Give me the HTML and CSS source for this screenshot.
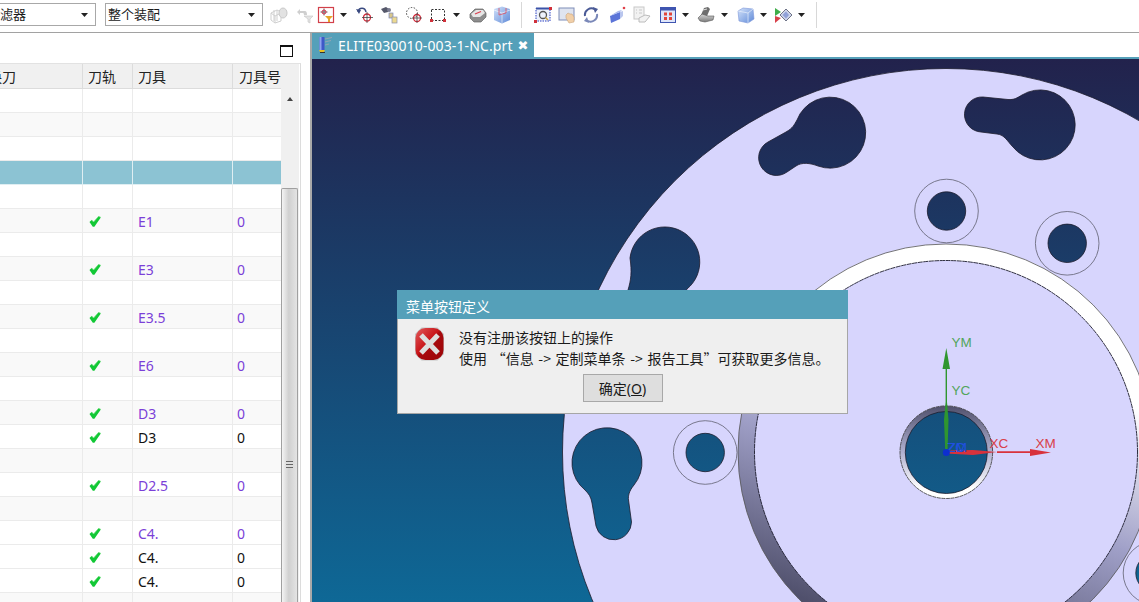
FILE: index.html
```html
<!DOCTYPE html>
<html lang="zh-CN">
<head>
<meta charset="utf-8">
<title>ELITE030010-003-1-NC.prt</title>
<link rel="stylesheet" href="styles.css">
</head>
<body>
<svg class="defs" width="0" height="0" aria-hidden="true">
  <symbol id="check" viewBox="0 0 12 11">
    <path d="M0.5 6 L2.6 3.9 L4.6 6 L9.6 0.3 L11.8 1.4 L5.4 10.8 L3.8 10.8 Z" fill="#12c836"/>
    <path d="M2.6 3.9 L4.6 6 L9.6 0.3 L11.8 1.4" fill="none" stroke="#6fe07a" stroke-width=".7"/>
  </symbol>
  <symbol id="caret" viewBox="0 0 7 4"><path d="M0 0H7L3.5 4Z" fill="#222"/></symbol>
  <linearGradient id="cube" x1="0" y1="0" x2="1" y2="1"><stop offset="0" stop-color="#d3e2fa"/><stop offset="1" stop-color="#5f8ad8"/></linearGradient>
  <linearGradient id="grey" x1="0" y1="0" x2="0" y2="1"><stop offset="0" stop-color="#d8d8d8"/><stop offset="1" stop-color="#7a7a7a"/></linearGradient>
</svg>

<header class="toolbar">
  <div class="combo combo-filter"><span>滤器</span><svg class="caret"><use href="#caret"/></svg></div>
  <div class="combo combo-scope"><span>整个装配</span><svg class="caret"><use href="#caret"/></svg></div>

  <svg class="ico ml7" viewBox="0 0 18 18"><path d="M1 7 7 4 11 6V15L5 17 1 14ZM1 7 5 10V17M5 10 11 7M4 4V15M7 4V15" fill="none" stroke="#cfcfcf"/><ellipse cx="13" cy="7" rx="4" ry="5" fill="#e2e2e2" stroke="#c8c8c8"/></svg>
  <svg class="ico ml8" viewBox="0 0 18 18"><path d="M1 6 4 3V5H9Q11 5 11 9H8Q8 7 7 7H4V9Z" fill="#cfcfcf"/><path d="M8 10H17L14 13V17L12 16V13Z" fill="#e4e4e4" stroke="#c4c4c4" stroke-width=".6"/></svg>
  <svg class="ico ml3" viewBox="0 0 18 18"><rect x="1.500" y="1.500" width="15" height="15" fill="#fff" stroke="#d2404a" stroke-width="1.200"/><path d="M7 2.500V9.500M3.500 6H10.500" stroke="#444" stroke-width=".8"/><circle cx="7" cy="6" r="2" fill="none" stroke="#d0304a"/><path d="M8 10H16L13 13V16H11V13Z" fill="#e6a62a"/></svg>
  <svg class="car ml5"><use href="#caret"/></svg>
  <svg class="ico ml9" viewBox="0 0 18 18"><path d="M2 6C3 1 9 1 10 6" fill="none" stroke="#3a4a80" stroke-width="1.500"/><path d="M0 3 3 8 5 4Z" fill="#3a4a80"/><circle cx="11" cy="11.500" r="3.500" fill="none" stroke="#d02a3a" stroke-width="1.300"/><path d="M11 6V17M6 11.500H17" stroke="#444" stroke-width=".8"/></svg>
  <svg class="ico ml6" viewBox="0 0 18 18"><path d="M1 3 6 1 9 3 8 6 4 7Z" fill="#55586a"/><circle cx="9" cy="4" r="2" fill="#7a7c90"/><rect x="9" y="7" width="4" height="5" fill="#d9c78a" stroke="#7c88b8" stroke-width=".7"/><rect x="12" y="11" width="5" height="6" fill="#ecd98f" stroke="#8a8fb0" stroke-width=".7"/></svg>
  <svg class="ico ml7" viewBox="0 0 18 18"><circle cx="7" cy="7" r="5.500" fill="none" stroke="#444" stroke-dasharray="1.500 1.500"/><circle cx="12" cy="12" r="3.500" fill="none" stroke="#d02a3a" stroke-width="1.300"/><path d="M12 7V17M7 12H17" stroke="#444" stroke-width=".8"/></svg>
  <svg class="ico ml6" viewBox="0 0 18 18"><rect x="2.500" y="3.500" width="13" height="11" fill="none" stroke="#333" stroke-dasharray="2 1.500"/><rect x="1" y="13" width="3" height="3" fill="#d0303a"/><rect x="14" y="13" width="3" height="3" fill="#d0303a"/></svg>
  <svg class="car ml6"><use href="#caret"/></svg>
  <svg class="ico ml9" viewBox="0 0 18 18"><path d="M1 8 6 3 14 3 17 7V11L12 16H5L1 12Z" fill="#8d8d8d" stroke="#666" stroke-width=".7"/><path d="M2 8 7 4H14L16 7 11 11H4Z" fill="#e6e6e6"/><path d="M6 8 12 5.500" stroke="#d94050" stroke-width="1.300"/></svg>
  <svg class="ico ml6" viewBox="0 0 18 18"><path d="M1 3 9 0.500 17 3V14L9 17.500 1 14Z" fill="url(#cube)"/><path d="M1 4 9 7 17 4M9 7V17" fill="none" stroke="#fff" stroke-width=".6"/><path d="M6 2V9L13 7V2" fill="none" stroke="#e05060" stroke-width=".8"/></svg>
  <span class="sep"></span>
  <svg class="ico ml12" viewBox="0 0 18 18"><rect x="2" y="2.500" width="14" height="12.500" fill="#eef2fb" stroke="#2a3fc0" stroke-dasharray="1.500 1"/><rect x="2" y="1.500" width="14" height="2" fill="#3a52a8"/><circle cx="9" cy="9" r="3.500" fill="none" stroke="#555" stroke-width="1.300"/><path d="M11.500 11.500 14 14" stroke="#c9a23c" stroke-width="1.500"/><rect x="0" y="14" width="3" height="3" fill="#d0303a"/><rect x="15" y="1" width="3" height="3" fill="#d0303a"/></svg>
  <svg class="ico ml6" viewBox="0 0 18 18"><rect x="1" y="2" width="15" height="12" fill="#dfe4f0" stroke="#7f8db8"/><path d="M8 9 10 7 12 8 14 8 16 11 16 16 11 17 8 12Z" fill="#f1cfa8" stroke="#c9a47c" stroke-width=".6"/></svg>
  <svg class="ico ml6" viewBox="0 0 18 18"><path d="M3 10A6.500 6.500 0 0 1 13 3.500" fill="none" stroke="#4a5a96" stroke-width="2"/><path d="M15 8A6.500 6.500 0 0 1 5 14.500" fill="none" stroke="#7a88b8" stroke-width="2"/><path d="M11 1 16 3 13 7Z" fill="#4a5a96"/><path d="M7 17 2 15 5 11Z" fill="#7a88b8"/></svg>
  <svg class="ico ml8" viewBox="0 0 18 18"><path d="M2 10 12 6V13L3 17Z" fill="#5b74d8"/><path d="M2 10 10 5 14 4 12 6Z" fill="#a8b8ee"/><path d="M12 6 15 5V10L12 13Z" fill="#b9c6ee"/><circle cx="16" cy="2" r="1.300" fill="#e0404a"/></svg>
  <svg class="ico ml7" viewBox="0 0 18 18"><rect x="1" y="1" width="10" height="12" fill="#f2f2f2" stroke="#c8c8c8"/><path d="M3 4H4M6 4H9M3 7H4M6 7H9" stroke="#c8c8c8"/><path d="M6 12 12 9 17 10 12 16 6 16Z" fill="#f2f2f2" stroke="#bcbcbc"/></svg>
  <svg class="ico ml8" viewBox="0 0 18 18"><rect x="1.500" y="1.500" width="15" height="15" fill="#dfe6fa" stroke="#3f55b0"/><rect x="1.500" y="1.500" width="15" height="3" fill="#3f55b0"/><path d="M5 6.500H8V9.500H5ZM10 6.500H13V9.500H10ZM5 11H8V14H5ZM10 11H13V14H10Z" fill="#e2453a"/></svg>
  <svg class="car ml5"><use href="#caret"/></svg>
  <svg class="ico ml8" viewBox="0 0 18 18"><path d="M4 9 7 2 11 1 13 3 10 10Z" fill="#6e6e6e"/><path d="M1 12 5 8 11 10 17 10 16 14 8 16 3 15Z" fill="url(#grey)" stroke="#555" stroke-width=".6"/><path d="M6 4 10 3" stroke="#ddd"/></svg>
  <svg class="car ml6"><use href="#caret"/></svg>
  <svg class="ico ml9" viewBox="0 0 18 18"><path d="M1 5 6 2 16 3 17 13 11 17 2 15Z" fill="url(#cube)" stroke="#7c95d8" stroke-width=".6"/><path d="M1 5 11 7 16 3M11 7V17" fill="none" stroke="#e8effb" stroke-width=".7"/></svg>
  <svg class="car ml5"><use href="#caret"/></svg>
  <svg class="ico ml7" viewBox="0 0 18 18"><path d="M6 9 12 3 18 9 12 15Z" fill="#cdd4ea" stroke="#6f7488"/><path d="M8.500 9 12 5.500 15 9 12 12.500Z" fill="#8fa0d8"/><path d="M1 2 7 6 1 10Z" fill="#3fae4a"/><path d="M1 10 7 12 1 17Z" fill="#d8404a"/></svg>
  <svg class="car ml6"><use href="#caret"/></svg>
  <span class="sep sep-end"></span>
</header>

<main class="workspace">
  <section class="nav-panel">
    <div class="panel-head"><span class="maximize"></span></div>
    <div class="grid-wrap">
      <table class="grid">
        <colgroup><col class="c1"><col class="c2"><col class="c3"><col class="c4"></colgroup>
        <thead><tr><th><span class="clip-head">换刀</span></th><th>刀轨</th><th>刀具</th><th>刀具号</th></tr></thead>
        <tbody>
          <tr><td></td><td></td><td></td><td></td></tr>
          <tr class="alt"><td></td><td></td><td></td><td></td></tr>
          <tr><td></td><td></td><td></td><td></td></tr>
          <tr class="sel"><td></td><td></td><td></td><td></td></tr>
          <tr><td></td><td></td><td></td><td></td></tr>
          <tr class="alt link"><td></td><td><svg class="ok"><use href="#check"/></svg></td><td>E1</td><td>0</td></tr>
          <tr><td></td><td></td><td></td><td></td></tr>
          <tr class="alt link"><td></td><td><svg class="ok"><use href="#check"/></svg></td><td>E3</td><td>0</td></tr>
          <tr><td></td><td></td><td></td><td></td></tr>
          <tr class="alt link"><td></td><td><svg class="ok"><use href="#check"/></svg></td><td>E3.5</td><td>0</td></tr>
          <tr><td></td><td></td><td></td><td></td></tr>
          <tr class="alt link"><td></td><td><svg class="ok"><use href="#check"/></svg></td><td>E6</td><td>0</td></tr>
          <tr><td></td><td></td><td></td><td></td></tr>
          <tr class="alt link"><td></td><td><svg class="ok"><use href="#check"/></svg></td><td>D3</td><td>0</td></tr>
          <tr><td></td><td><svg class="ok"><use href="#check"/></svg></td><td>D3</td><td>0</td></tr>
          <tr class="alt"><td></td><td></td><td></td><td></td></tr>
          <tr class="link"><td></td><td><svg class="ok"><use href="#check"/></svg></td><td>D2.5</td><td>0</td></tr>
          <tr class="alt"><td></td><td></td><td></td><td></td></tr>
          <tr class="link"><td></td><td><svg class="ok"><use href="#check"/></svg></td><td>C4.</td><td>0</td></tr>
          <tr><td></td><td><svg class="ok"><use href="#check"/></svg></td><td>C4.</td><td>0</td></tr>
          <tr><td></td><td><svg class="ok"><use href="#check"/></svg></td><td>C4.</td><td>0</td></tr>
          <tr class="alt"><td></td><td></td><td></td><td></td></tr>
        </tbody>
      </table>
      <div class="scrollbar">
        <div class="scroll-up"></div>
        <div class="scroll-thumb"><span class="grip"></span></div>
      </div>
    </div>
  </section>

  <section class="view-panel">
    <div class="tabstrip">
      <div class="tab">
        <svg class="tab-icon" viewBox="0 0 16 18"><path d="M7 3 14 1.500M7 6 13 4.500M7 9 11 8" stroke="#9aa6b4" stroke-width=".9"/><rect x="1.500" y="1" width="5" height="13" fill="#3f58c8"/><rect x="1.500" y="1" width="2" height="13" fill="#8ea2ee"/><path d="M1 14H7L6 16H2Z" fill="#e8c020"/><path d="M2 16.500H7" stroke="#333" stroke-width="1"/></svg>
        <span class="tab-name">ELITE030010-003-1-NC.prt</span>
        <span class="tab-close">✖</span>
      </div>
    </div>
    <div class="viewport">
      <svg class="model" viewBox="312 59 827 543">
        <defs>
          <linearGradient id="sky" gradientUnits="userSpaceOnUse" x1="0" y1="59" x2="0" y2="602"><stop offset="0" stop-color="#22224c"/><stop offset="1" stop-color="#0e6896"/></linearGradient>
          <linearGradient id="bore" gradientUnits="userSpaceOnUse" x1="946" y1="332" x2="847" y2="614"><stop offset="0.03" stop-color="#fff"/><stop offset="0.49" stop-color="#a0a0c8"/><stop offset="1" stop-color="#50506c"/></linearGradient>
          <linearGradient id="wall" gradientUnits="userSpaceOnUse" x1="0" y1="406" x2="0" y2="498"><stop offset="0" stop-color="#50506c"/><stop offset=".5" stop-color="#b0b0d0"/><stop offset=".9" stop-color="#fff"/></linearGradient>
        </defs>
        <rect class="sky" x="312" y="59" width="827" height="543"/>
        <circle class="disk" cx="946" cy="452" r="383.500"/>
        <circle class="bore-outer" cx="946" cy="452" r="208"/>
        <circle class="bore-inner" cx="946" cy="452" r="191.500"/>

        <path class="hole" d="M797 120A35.500 35.500 0 1 1 818 166C810 163 802 162 796 166L787 172A17.800 17.800 0 1 1 768 142L786 132C793 128 794 125 797 120Z"/>
        <path class="hole" d="M1022 95A35 35 0 1 1 1013 147C1007 141 1005 135 997 134L981 132A17.500 17.500 0 0 1 983 97L1008 99.500C1014 100 1017 98 1022 95Z"/>
        <path class="hole" d="M630 258A35 35 0 1 1 687 289L680 300H630L628 290C631 280 632 272 630 258Z"/>
        <path class="hole" d="M585 490A35 35 0 1 1 634 485C629 491 628 496 628.500 500L631.500 522A18 18 0 0 1 596 526L592 503C591 497 589 494 585 490Z"/>

        <circle class="collar" cx="946.500" cy="211" r="31.800"/><circle class="hole" cx="946.500" cy="211" r="19.200"/>
        <circle class="collar" cx="1067.200" cy="243.300" r="31.800"/><circle class="hole" cx="1067.200" cy="243.300" r="19.200"/>
        <circle class="collar" cx="705.200" cy="452.500" r="31.800"/><circle class="hole" cx="705.200" cy="452.500" r="19.200"/>
        <circle class="collar" cx="1155" cy="573" r="31.800"/><circle class="hole" cx="1155" cy="573" r="19.200"/>

        <circle class="center-wall" cx="946.300" cy="452.200" r="46.300"/>
        <circle class="hole" cx="946.300" cy="452.500" r="41"/>

        <path class="axis-y" d="M942.500 369 946.300 348 950 369 947 369V402L948.500 420 947.500 452H945.300L944 420 945.600 402V369Z"/>
        <path class="axis-x" d="M946 450.500 973 450 997 452 973 455 946 453.500Z"/>
        <path class="axis-x" d="M997 451.300H1030V449L1051 452.500 1030 456V453H997Z"/>
        <text class="lbl lbl-z" x="947" y="452">ZC</text>
        <text class="lbl lbl-z" x="947.500" y="452">ZM</text>
        <circle class="origin" cx="946.300" cy="452.500" r="3.500"/>
        <text class="lbl lbl-y" x="951.500" y="347">YM</text>
        <text class="lbl lbl-y" x="951.500" y="395">YC</text>
        <text class="lbl lbl-x" x="989.500" y="448">XC</text>
        <text class="lbl lbl-x" x="1035.500" y="448">XM</text>
      </svg>

      <div class="dialog" role="dialog">
        <div class="dialog-title">菜单按钮定义</div>
        <div class="dialog-body">
          <svg class="err" viewBox="0 0 30 34">
            <defs>
              <linearGradient id="errfill" x1="0" y1="0" x2="1" y2="1"><stop offset="0" stop-color="#e25a5c"/><stop offset=".45" stop-color="#c81418"/><stop offset=".5" stop-color="#a80a0e"/><stop offset="1" stop-color="#9c0408"/></linearGradient>
            </defs>
            <path d="M7 .5H23L29.500 7V27L23 33.500H7L.5 27V7Z" fill="#c4c4c4"/>
            <rect x="1" y="1" width="28" height="32" rx="10" fill="url(#errfill)"/>
            <path d="M6.500 8 23.500 26M23.500 8 6.500 26" stroke="#dedede" stroke-width="5"/>
          </svg>
          <div class="message">
            <p>没有注册该按钮上的操作</p>
            <p class="spaced">使用 “信息 -&gt; 定制菜单条 -&gt; 报告工具”可获取更多信息。</p>
          </div>
        </div>
        <div class="dialog-actions"><button class="btn" type="button">确定(<u>O</u>)</button></div>
      </div>
    </div>
  </section>
</main>
</body>
</html>
```
FILE: styles.css
```css
* { box-sizing: border-box; }
html, body { margin: 0; height: 100%; overflow: hidden; background: #fff; }
body { width: 1139px; height: 602px; font: 14px "Noto Sans", "Noto Sans CJK SC", sans-serif; color: #1a1a1a; }
.defs { position: absolute; }

.toolbar { display: flex; align-items: center; height: 33px; border-bottom: 1px solid #a2a2a2; padding-bottom: 3px; background: #fff; }
.combo { display: flex; align-items: center; justify-content: space-between; height: 23px; border: 1px solid #a8a8a8; font-size: 13px; line-height: 1; }
.combo-filter { width: 100px; margin-left: -4px; padding: 0 7px 0 3px; }
.combo-scope { width: 158px; margin-left: 9px; padding: 0 7px 0 2px; }
.caret { width: 7px; height: 4px; }
.ico { width: 18px; height: 18px; flex: none; }
.car { width: 7px; height: 4px; flex: none; }
.ml3 { margin-left: 3px; } .ml5 { margin-left: 5px; } .ml6 { margin-left: 6px; } .ml7 { margin-left: 7px; }
.ml8 { margin-left: 8px; } .ml9 { margin-left: 9px; } .ml12 { margin-left: 12px; }
.sep { width: 1px; height: 26px; margin-left: 10px; background: #d8d8d8; flex: none; }
.sep-end { margin-left: 11px; }

.workspace { display: flex; height: 569px; }
.nav-panel { width: 312px; flex: none; border-right: 2px solid #a9a9a9; }
.panel-head { display: flex; justify-content: flex-end; align-items: flex-end; height: 30px; padding: 0 17px 6px 0; }
.maximize { width: 13px; height: 12px; border: 1px solid #111; border-top-width: 2px; }
.grid-wrap { display: flex; width: 301px; height: 539px; border-top: 1px solid #e2e2e2; border-right: 1px solid #dcdcdc; overflow: hidden; }

.grid { width: 281px; flex: none; border-collapse: separate; border-spacing: 0; table-layout: fixed; align-self: flex-start; }
.c1 { width: 83px; } .c2 { width: 50px; } .c3 { width: 100px; } .c4 { width: 48px; }
.grid th { height: 25px; padding: 1px 0 0 5px; background: #f0f0f0; font-weight: 400; text-align: left; border-right: 1px solid #dcdcdc; border-bottom: 1px solid #dcdcdc; color: #222; line-height: 1; white-space: nowrap; }
.grid th:last-child { padding-left: 6px; border-right: 0; }
.clip-head { display: block; margin-left: -17px; }
.grid td { height: 24px; padding: 2px 0 0 5px; border-right: 1px solid #ebebeb; border-bottom: 1px solid #ebebeb; line-height: 1; background: #fff; color: #111; }
.grid td:last-child { padding-left: 4px; border-right: 0; }
.grid .alt td { background: #f9f9f9; }
.grid .sel td { background: #8cc3d3; border-color: #dfeef2; }
.grid .link td { color: #7b3fd8; }
.ok { display: block; width: 12px; height: 11px; margin: -1px 0 0 1px; }

.scrollbar { width: 18px; flex: none; display: flex; flex-direction: column; background: #f0f0f0; padding: 25px 1px 0 0; }
.scroll-up { flex: none; align-self: center; width: 0; height: 0; margin-top: 8px; border: 3.500px solid transparent; border-top: 0; border-bottom: 4px solid #444; }
.scroll-thumb { flex: 1; display: flex; align-items: flex-start; justify-content: center; margin-top: 87px; padding-top: 272px; border: 1px solid #a0a0a0; border-bottom: 0; border-radius: 2px 2px 0 0; background: linear-gradient(90deg, #f4f4f4 0, #d0d0d0 45%, #e4e4e4 100%); }
.grip { width: 7px; height: 7px; background: repeating-linear-gradient(180deg, #666 0 1px, #ddd 1px 3px); }

.view-panel { flex: 1; display: flex; flex-direction: column; min-width: 0; }
.tabstrip { display: flex; height: 26px; border-bottom: 2px solid #55a0b9; flex: none; }
.tab { display: flex; align-items: center; width: 222px; height: 24px; background: #55a0b9; color: #fff; padding-left: 6px; }
.tab-icon { width: 16px; height: 18px; flex: none; }
.tab-name { margin-left: 4px; font-size: 14px; letter-spacing: .12px; white-space: nowrap; }
.tab-close { margin-left: 5px; font-size: 13px; line-height: 1; font-family: "DejaVu Sans", sans-serif; }

.viewport { position: relative; flex: 1; overflow: hidden; background: #22224c; }
.model { display: block; width: 827px; height: 543px; }
.sky { fill: url(#sky); }
.disk { fill: #d7d5fd; stroke: #1c1c2c; stroke-width: .8; }
.bore-outer { fill: url(#bore); stroke: #555; stroke-width: .8; }
.bore-inner { fill: #d7d5fd; stroke: #1c1c2c; stroke-width: .9; stroke-dasharray: 5 .6; }
.hole { fill: url(#sky); stroke: #1c1c2c; stroke-width: .8; }
.collar { fill: #d7d5fd; stroke: #6d6d80; stroke-width: .9; }
.center-wall { fill: url(#wall); stroke: #333; stroke-width: .8; stroke-dasharray: 4 .6; }
.axis-y { fill: #2f962f; }
.axis-x { fill: #d8323c; }
.origin { fill: #0d2fd0; }
.lbl { font: 13.500px "Liberation Sans", sans-serif; }
.lbl-y { fill: #52a55c; }
.lbl-x { fill: #d8404a; }
.lbl-z { fill: #2050e0; }

.dialog { position: absolute; left: 85px; top: 231px; width: 451px; height: 124px; background: #efefef; border: 1px solid #a6a6a6; border-top: 0; display: flex; flex-direction: column; }
.dialog-title { height: 29px; margin: 0 -1px; padding: 7px 0 0 9px; background: #55a0b9; color: #fff; line-height: 20px; flex: none; }
.dialog-body { display: flex; align-items: flex-start; padding: 8px 0 0 16px; }
.err { width: 31px; height: 34px; flex: none; }
.message { margin: 0 0 0 14px; font-family: "Noto Sans CJK SC", "Noto Sans", sans-serif; }
.message p { margin: 0; height: 21px; line-height: 21px; white-space: nowrap; color: #1a1a1a; }
.message .spaced { word-spacing: 1.500px; }
.dialog-actions { display: flex; justify-content: center; margin-top: 5px; padding-right: 0; }
.btn { width: 80px; height: 28px; padding: 0; background: #dedede; border: 1px solid #a8a8a8; font: inherit; color: #1a1a1a; }
```
